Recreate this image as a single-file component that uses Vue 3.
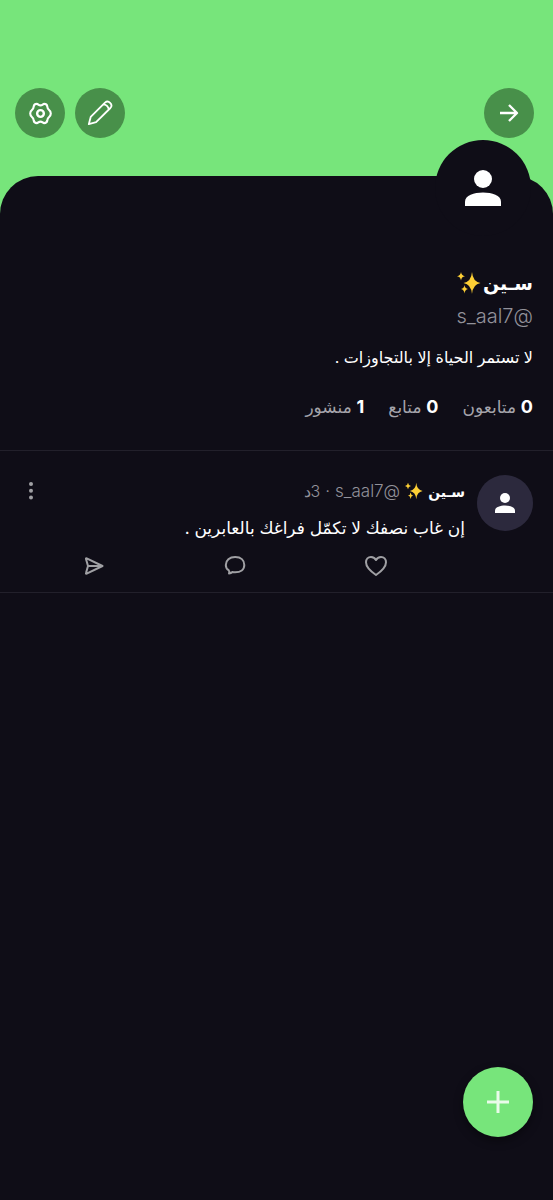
<script setup>
const stats = [
  { value: 0, label: 'متابعون' },
  { value: 0, label: 'متابع' },
  { value: 1, label: 'منشور' },
]
</script>

<template>
  <div class="page" dir="rtl" lang="ar">
    <header class="cover">
      <button class="round" aria-label="رجوع">
        <svg width="26" height="26" viewBox="0 0 26 26"><path d="M4 13H21M13 5L21 13L13 21" stroke-width="2.3" /></svg>
      </button>
      <div class="tools">
        <button class="round" aria-label="تعديل">
          <svg width="28" height="28" viewBox="0 0 28 28"><path d="M2.800 25.200L4.700 17.900L19 3.600C22.400 0.500 27.500 5.500 24.400 9L10.100 23.200ZM17.300 5.300C20 5.300 22.700 8 22.700 10.700" stroke-width="1.8" /></svg>
        </button>
        <button class="round" aria-label="الإعدادات">
          <svg width="25" height="25" viewBox="0 0 26 26"><path d="M9.200 3C10.600 3 11 4.600 13 4.600C15 4.600 15.400 3 16.800 3C18.500 3 19.700 3.900 20 5.400C20.200 7 20.300 8.200 21.800 9.200C23.200 10.200 23.700 11.400 23.700 13C23.700 14.600 23.200 15.800 21.800 16.800C20.300 17.800 20.200 19 20 20.600C19.700 22.100 18.500 23 16.800 23C15.400 23 15 21.400 13 21.400C11 21.400 10.600 23 9.200 23C7.500 23 6.300 22.100 6 20.600C5.800 19 5.700 17.800 4.200 16.800C2.800 15.800 2.300 14.600 2.300 13C2.300 11.400 2.800 10.200 4.200 9.200C5.700 8.200 5.800 7 6 5.400C6.300 3.900 7.500 3 9.200 3Z" stroke-width="2.200" /><circle cx="13" cy="13" r="3.500" stroke-width="2.500" /></svg>
        </button>
      </div>
    </header>

    <main class="sheet">
      <section class="profile">
        <div class="avatar large">
          <svg width="36" height="36" viewBox="0 0 36 36"><circle cx="18" cy="9" r="9" /><path d="M0 36V31.500C0 25.500 9 22.500 18 22.500S36 25.500 36 31.500V36Z" /></svg>
        </div>
        <h1 class="title">
          <span>سـين</span>
          <svg class="spark" width="24" height="24" viewBox="0 0 24 24"><path d="M15 1Q15.800 10.700 23.500 12Q15.800 13.300 15 23Q14.200 13.300 6.500 12Q14.200 10.700 15 1Z" /><path d="M4 1Q4.400 4.600 8 5.200Q4.400 5.800 4 9.500Q3.600 5.800 0 5.200Q3.600 4.600 4 1Z" /><path d="M7.500 14Q7.900 17.500 11 18Q7.900 18.500 7.500 22.500Q7.100 18.500 4 18Q7.100 17.500 7.500 14Z" /></svg>
        </h1>
        <div class="handle">@s_aal7</div>
        <p class="bio">لا تستمر الحياة إلا بالتجاوزات .</p>
        <div class="stats">
          <a v-for="s in stats" :key="s.label" class="stat" href="#"><b>{{ s.value }}</b> {{ s.label }}</a>
        </div>
      </section>

      <article class="post">
        <div class="avatar small">
          <svg width="20" height="20" viewBox="0 0 36 36"><circle cx="18" cy="9" r="9" /><path d="M0 36V31.500C0 25.500 9 22.500 18 22.500S36 25.500 36 31.500V36Z" /></svg>
        </div>
        <div class="content">
          <div class="meta">
            <span class="author">سـين</span>
            <svg class="spark" width="18" height="18" viewBox="0 0 24 24"><path d="M15 1Q15.800 10.700 23.500 12Q15.800 13.300 15 23Q14.200 13.300 6.500 12Q14.200 10.700 15 1Z" /><path d="M4 1Q4.400 4.600 8 5.200Q4.400 5.800 4 9.500Q3.600 5.800 0 5.200Q3.600 4.600 4 1Z" /><path d="M7.500 14Q7.900 17.500 11 18Q7.900 18.500 7.500 22.500Q7.100 18.500 4 18Q7.100 17.500 7.500 14Z" /></svg>
            <span class="by">@s_aal7</span>
            <span class="by">·</span>
            <span class="by time">3د</span>
            <button class="plain more" aria-label="المزيد">
              <svg width="6" height="20" viewBox="0 0 6 20"><circle cx="3" cy="3" r="2" /><circle cx="3" cy="9.700" r="2" /><circle cx="3" cy="16.400" r="2" /></svg>
            </button>
          </div>
          <p class="text">إن غاب نصفك لا تكمّل فراغك بالعابرين .</p>
          <div class="actions">
            <button class="plain" aria-label="إعجاب">
              <svg width="24" height="22" viewBox="0 0 24 22"><path d="M12 20C9.500 18.300 2 12.500 2 7.300C2 4.200 4.100 1.900 7 1.900C9.200 1.900 11 3 12 5C13 3 14.800 1.900 17 1.900C19.900 1.900 22 4.200 22 7.300C22 12.500 14.500 18.300 12 20Z" /></svg>
            </button>
            <button class="plain" aria-label="تعليق">
              <svg width="24" height="22" viewBox="0 0 24 22"><path d="M5.600 15.200C3.400 13.800 2.800 12 2.800 10C2.800 5.300 6.500 2 12.200 2S21.300 5.300 21.300 10S17.500 17.300 12.200 17.300C11.200 17.300 10.200 17.200 9.400 17C8.400 18 7.400 18.400 6 18.500C6.500 17.500 6.500 16.200 5.600 15.200Z" /></svg>
            </button>
            <button class="plain" aria-label="إرسال">
              <svg width="24" height="22" viewBox="0 0 24 22"><path d="M4 4C3.800 3.400 4.200 3.200 4.700 3.400L20.500 11L4.700 18.600C4.200 18.800 3.800 18.600 4 18L6 11ZM6 11H20" /></svg>
            </button>
          </div>
        </div>
      </article>
    </main>

    <button class="fab" aria-label="منشور جديد">
      <svg width="24" height="24" viewBox="0 0 24 24"><path d="M12 1V23M1 12H23" /></svg>
    </button>
  </div>
</template>

<style>
body {
  background: #0f0d17;
}
</style>

<style scoped>
.page {
  min-height: 100vh;
  background: #77e57b;
  color: #fff;
  font-family: Inter, "DejaVu Sans", sans-serif;
  display: flex;
  flex-direction: column;
}
button {
  border: 0;
  padding: 0;
  font: inherit;
  color: inherit;
  cursor: pointer;
}
svg {
  display: block;
  flex: none;
}
.cover {
  height: 88px;
  padding: 88px 19px 0 15px;
  display: flex;
  justify-content: space-between;
}
.tools {
  display: flex;
  gap: 10px;
}
.round {
  width: 50px;
  height: 50px;
  border-radius: 50%;
  background: #48904a;
  display: grid;
  place-items: center;
}
.round path,
.round circle {
  fill: none;
  stroke: #fff;
  stroke-linejoin: round;
}
.sheet {
  flex: 1;
  background: #0f0d17;
  border-radius: 38px 38px 0 0;
}
.profile {
  display: flex;
  flex-direction: column;
  padding: 0 20px 30px;
  border-bottom: 1px solid #22202b;
}
.avatar {
  flex: none;
  border-radius: 50%;
  display: grid;
  place-items: center;
  fill: #fff;
}
.large {
  width: 96px;
  height: 96px;
  margin: -36px 2px 0;
  background: #0f0d17;
}
.small {
  width: 56px;
  height: 56px;
  background: #2c293d;
}
.spark {
  fill: #fdcf35;
}
.title {
  display: flex;
  align-items: center;
  gap: 2px;
  height: 32px;
  margin: 31px 0 0;
  font-size: 19px;
  font-weight: 700;
}
.handle {
  margin-top: 3px;
  font-size: 20px;
  font-weight: 300;
  line-height: 28px;
  color: #92919a;
}
.bio {
  margin: 14px 0 0;
  font-size: 16px;
  line-height: 26px;
}
.stats {
  display: flex;
  gap: 24px;
  margin-top: 24px;
  font-size: 17px;
  line-height: 26px;
}
.stat {
  color: #a5a4ab;
  text-decoration: none;
}
.stat b {
  color: #fff;
  font-size: 18px;
}
.post {
  display: flex;
  gap: 12px;
  padding: 24px 20px 15px;
  border-bottom: 1px solid #22202b;
}
.content {
  flex: 1;
  min-width: 0;
}
.meta {
  display: flex;
  align-items: center;
  gap: 5px;
  height: 32px;
  font-size: 17px;
}
.author {
  font-size: 14px;
  font-weight: 700;
}
.by {
  font-weight: 300;
  color: #92919a;
}
.time {
  font-size: 16px;
}
.plain {
  background: none;
}
.more {
  margin-inline-start: auto;
  padding: 0 8px;
  fill: #a0a0a4;
}
.text {
  margin: 6px 0 0;
  font-size: 17px;
  line-height: 30px;
}
.actions {
  display: flex;
  justify-content: space-between;
  margin: 12px 77px 0 62px;
}
.actions path {
  fill: none;
  stroke: #a0a0a4;
  stroke-width: 2;
  stroke-linejoin: round;
}
.fab {
  position: fixed;
  right: 20px;
  bottom: 63px;
  width: 70px;
  height: 70px;
  border-radius: 50%;
  background: #77e57b;
  box-shadow: 0 4px 10px rgba(0, 0, 0, 0.4);
  display: grid;
  place-items: center;
}
.fab path {
  stroke: #e9fbe9;
  stroke-width: 3;
}
</style>
